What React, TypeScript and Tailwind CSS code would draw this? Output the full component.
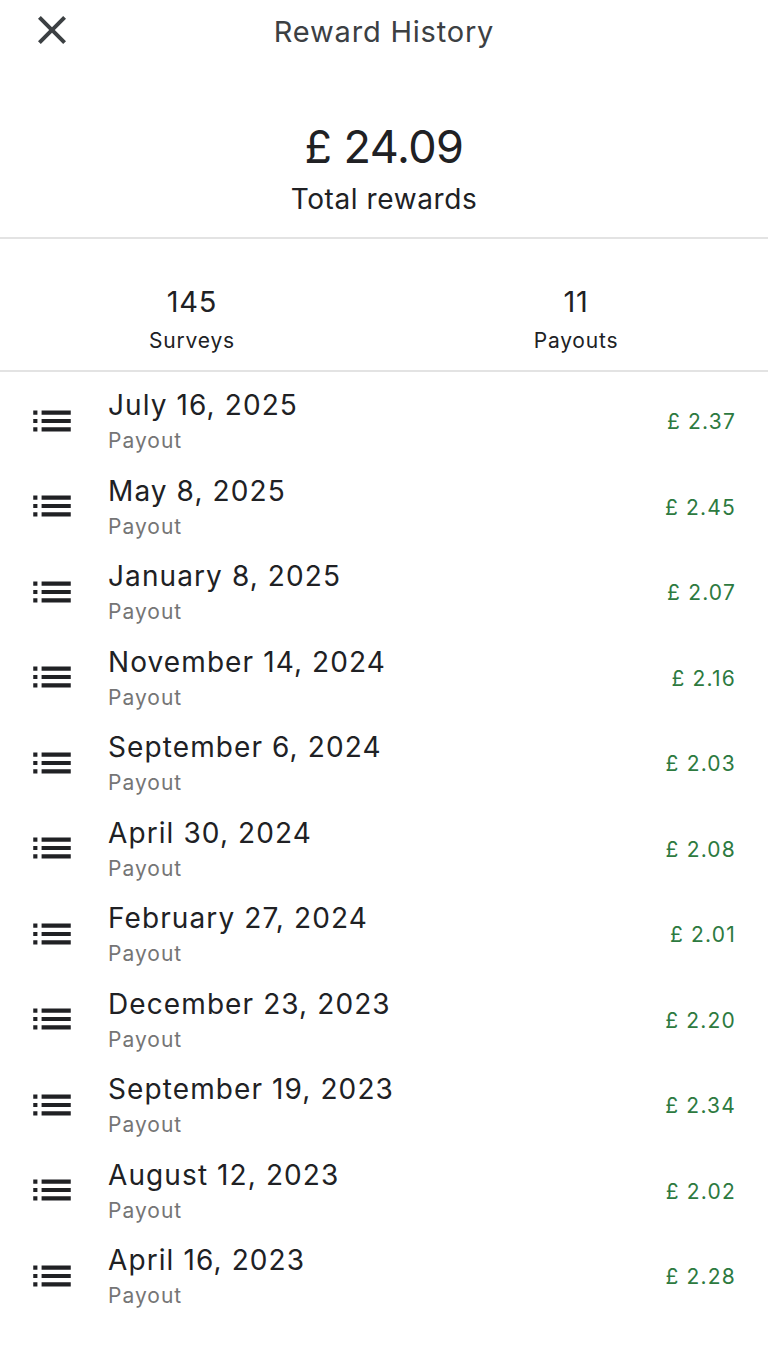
const rows = [
  { date: 'July 16, 2025', amount: '£ 2.37' },
  { date: 'May 8, 2025', amount: '£ 2.45' },
  { date: 'January 8, 2025', amount: '£ 2.07' },
  { date: 'November 14, 2024', amount: '£ 2.16' },
  { date: 'September 6, 2024', amount: '£ 2.03' },
  { date: 'April 30, 2024', amount: '£ 2.08' },
  { date: 'February 27, 2024', amount: '£ 2.01' },
  { date: 'December 23, 2023', amount: '£ 2.20' },
  { date: 'September 19, 2023', amount: '£ 2.34' },
  { date: 'August 12, 2023', amount: '£ 2.02' },
  { date: 'April 16, 2023', amount: '£ 2.28' },
];

const CloseIcon = () => (
  <svg viewBox="0 0 24 24" className="w-12 h-12" fill="#3c4043">
    <path d="M19 6.41L17.59 5 12 10.59 6.41 5 5 6.41 10.59 12 5 17.59 6.41 19 12 13.41 17.59 19 19 17.59 13.41 12z" />
  </svg>
);

const ListIcon = () => (
  <svg viewBox="0 0 24 24" className="w-[50px] h-[50px]" fill="#202124">
    <path d="M3 13h2v-2H3v2zm0 4h2v-2H3v2zm0-8h2V7H3v2zm4 4h14v-2H7v2zm0 4h14v-2H7v2zM7 7v2h14V7H7z" />
  </svg>
);

export default function App() {
  return (
    <div className="min-h-screen bg-white text-[#202124]" style={{ fontFamily: 'Inter, Roboto, sans-serif' }}>
      {/* Header */}
      <div className="relative h-16 flex items-center justify-center">
        <button className="absolute left-[28px] top-[6px]">
          <CloseIcon />
        </button>
        <h1 className="text-[29px] text-[#3c4043] tracking-[0.8px]">Reward History</h1>
      </div>

      {/* Total */}
      <div className="flex flex-col items-center pt-[55px] pb-[18px] border-b-2 border-[#e3e3e3]">
        <div className="text-[45px] leading-[56px] tracking-[-0.5px]">£ 24.09</div>
        <div className="mt-1 text-[28px] leading-[40px] tracking-[0.6px]">Total rewards</div>
      </div>

      {/* Stats */}
      <div className="grid grid-cols-2 pt-[45px] pb-[15px] border-b-2 border-[#e3e3e3]">
        <div className="flex flex-col items-center">
          <div className="text-[29px] leading-[36px] tracking-[0.8px]">145</div>
          <div className="mt-[7px] text-[21px] leading-[28px] tracking-[0.8px]">Surveys</div>
        </div>
        <div className="flex flex-col items-center">
          <div className="text-[29px] leading-[36px] tracking-[0.8px]">11</div>
          <div className="mt-[7px] text-[21px] leading-[28px] tracking-[0.8px]">Payouts</div>
        </div>
      </div>

      {/* List */}
      <div className="pt-[6px]">
        {rows.map((r) => (
          <div key={r.date} className="h-[85.5px] flex items-center pl-[27px] pr-[32px]">
            <ListIcon />
            <div className="ml-[31px] flex-1 flex flex-col pt-[3px]">
              <div className="text-[28px] leading-[38px] tracking-[1.1px]">{r.date}</div>
              <div className="text-[21px] leading-[34px] tracking-[1px] text-[#757575]">Payout</div>
            </div>
            <div className="text-[21px] tracking-[1.2px] text-[#2d7a3f] pt-[2px]">{r.amount}</div>
          </div>
        ))}
      </div>
    </div>
  );
}
